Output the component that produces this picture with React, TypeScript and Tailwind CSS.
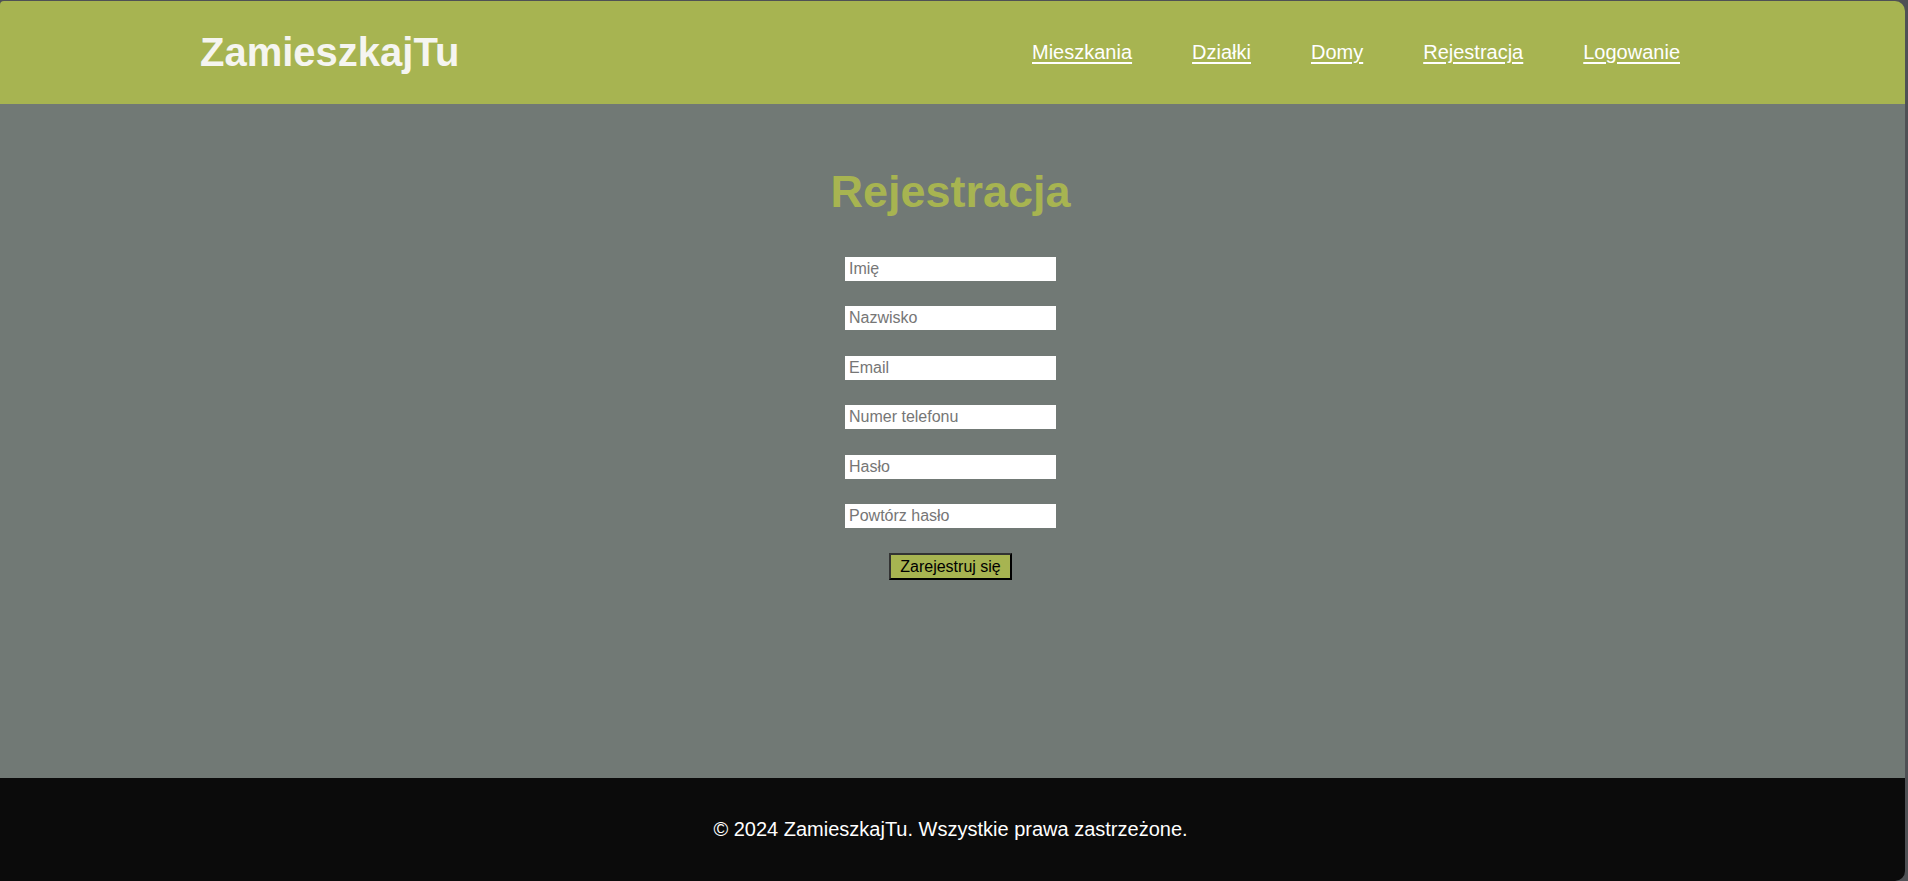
import { useState } from "react";

const FIELDS = [
  { name: "imie", placeholder: "Imię", type: "text" },
  { name: "nazwisko", placeholder: "Nazwisko", type: "text" },
  { name: "email", placeholder: "Email", type: "email" },
  { name: "telefon", placeholder: "Numer telefonu", type: "tel" },
  { name: "haslo", placeholder: "Hasło", type: "password" },
  { name: "haslo2", placeholder: "Powtórz hasło", type: "password" },
];

const NAV = ["Mieszkania", "Działki", "Domy", "Rejestracja", "Logowanie"];

// Registration page for ZamieszkajTu: green header, grey main with the form, black footer.
export default function App() {
  const [values, setValues] = useState<Record<string, string>>({});

  return (
    <div
      className="h-[881px] w-full overflow-hidden bg-[#4f5155] pt-px pr-[3px]"
      style={{ fontFamily: '"Liberation Sans", Arial, sans-serif' }}
    >
      <div className="flex h-full flex-col overflow-hidden rounded-tl-[4px] rounded-tr-[10px] rounded-br-[10px]">
        <header className="flex h-[103px] shrink-0 items-center justify-between bg-[#a7b451] pb-px pl-[200px] pr-[225px]">
          <div className="text-[40px] font-bold leading-none text-[#f5f5f0]">ZamieszkajTu</div>
          <nav className="flex gap-[60px] text-[20px] text-white">
            {NAV.map((n) => (
              <a key={n} href="#" className="underline underline-offset-[3px]">
                {n}
              </a>
            ))}
          </nav>
        </header>

        <main className="flex flex-1 flex-col items-center bg-[#717975] pr-[4px] pt-[60px]">
          <h1 className="mb-[37px] text-[45px] font-bold leading-[56px] text-[#a7b451]">Rejestracja</h1>
          <form className="flex flex-col items-center" onSubmit={(e) => e.preventDefault()}>
            {FIELDS.map((f) => (
              <input
                key={f.name}
                type={f.type}
                placeholder={f.placeholder}
                value={values[f.name] ?? ""}
                onChange={(e) => setValues((v) => ({ ...v, [f.name]: e.target.value }))}
                className="mb-[25.4px] h-[24px] w-[211px] bg-white px-1 text-[16px] text-black outline-none placeholder:text-[#767676]"
              />
            ))}
            <button
              type="submit"
              className="h-[27px] border-2 border-t-[#333] border-l-[#333] border-r-black border-b-black bg-[#a7b451] px-[9px] text-[16px] leading-none text-black"
            >
              Zarejestruj się
            </button>
          </form>
        </main>

        <footer className="flex h-[103px] shrink-0 items-center justify-center bg-[#0b0b0b] pb-[2px] pr-[4px] text-[20px] text-white">
          © 2024 ZamieszkajTu. Wszystkie prawa zastrzeżone.
        </footer>
      </div>
    </div>
  );
}
